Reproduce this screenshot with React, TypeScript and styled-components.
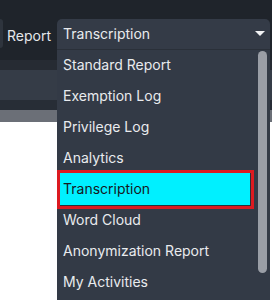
import React from "react";
import styled, { createGlobalStyle } from "styled-components";

const GlobalStyle = createGlobalStyle`
  html, body {
    margin: 0;
    padding: 0;
    background: #ffffff;
  }
  body {
    font-family: Inter, "Noto Sans", "Liberation Sans", sans-serif;
    width: 272px;
    height: 302px;
    overflow: hidden;
  }
`;

const reports = [
  "Standard Report",
  "Exemption Log",
  "Privilege Log",
  "Analytics",
  "Transcription",
  "Word Cloud",
  "Anonymization Report",
  "My Activities",
];

const selected = "Transcription";

const App: React.FC = () => {
  return (
    <>
      <GlobalStyle />
      <Page>
        <Header>
          <EdgeButton />
          <Label>Report</Label>
          <SelectWrap>
            <SelectBox>
              <span>{selected}</span>
              <Caret />
            </SelectBox>
            <Menu>
              <Options>
                {reports.map((item) => (
                  <Option key={item} $active={item === selected}>
                    {item}
                  </Option>
                ))}
              </Options>
              <Track>
                <Thumb />
              </Track>
            </Menu>
          </SelectWrap>
        </Header>
        <SubBar />
        <Toolbar />
        <Divider />
        <GreyStrip />
        <Content />
      </Page>
    </>
  );
};

export default App;

const Page = styled.div`
  display: flex;
  flex-direction: column;
  width: 272px;
  height: 302px;
`;

const Header = styled.div`
  display: flex;
  align-items: flex-start;
  height: 60px;
  box-sizing: border-box;
  padding-top: 19px;
  background: #1f242b;
`;

const EdgeButton = styled.div`
  width: 3px;
  height: 29px;
  background: #2e343d;
  border-radius: 0 4px 4px 0;
  margin-right: 4px;
`;

const Label = styled.div`
  color: #e6e8eb;
  font-size: 14px;
  line-height: 29px;
  height: 29px;
  padding-top: 2px;
  margin-right: 6px;
  width: 44px;
  white-space: nowrap;
`;

const SelectWrap = styled.div`
  position: relative;
  width: 213px;
`;

const SelectBox = styled.div`
  display: flex;
  align-items: center;
  justify-content: space-between;
  box-sizing: border-box;
  height: 30px;
  padding: 0 5px 2px 6px;
  background: #343b47;
  border-radius: 5px 5px 0 0;
  color: #e9ebee;
  font-size: 14px;
`;

const Caret = styled.div`
  width: 0;
  height: 0;
  border-left: 5px solid transparent;
  border-right: 5px solid transparent;
  border-top: 5px solid #f2f3f5;
  margin-top: 1px;
`;

const Menu = styled.div`
  position: absolute;
  left: 0;
  top: 30px;
  width: 213px;
  height: 251px;
  display: flex;
  background: #333a46;
  border-top: 1px solid #2a3039;
  box-sizing: border-box;
  z-index: 2;
`;

const Options = styled.div`
  display: flex;
  flex-direction: column;
  width: 198px;
`;

const Option = styled.div<{ $active?: boolean }>`
  height: ${(p) => (p.$active ? "33px" : "31px")};
  line-height: ${(p) => (p.$active ? "31px" : "29px")};
  box-sizing: border-box;
  font-size: 14px;
  white-space: nowrap;
  padding-left: ${(p) => (p.$active ? "3px" : "6px")};
  margin: ${(p) => (p.$active ? "-1px 4px -1px 3px" : "0")};
  color: ${(p) => (p.$active ? "#15181d" : "#e9ebee")};
  background: ${(p) => (p.$active ? "#00f0ff" : "transparent")};
  outline: ${(p) => (p.$active ? "3px solid #dc1a20" : "none")};
  box-shadow: ${(p) => (p.$active ? "inset -1px -1px 0 #2b3038" : "none")};
  position: ${(p) => (p.$active ? "relative" : "static")};
`;

const Track = styled.div`
  width: 15px;
  padding: 1px 0 0 3px;
  box-sizing: border-box;
`;

const Thumb = styled.div`
  width: 9px;
  height: 222px;
  border-radius: 5px;
  background: #9a9ea6;
`;

const SubBar = styled.div`
  height: 10px;
  background: #262b33;
`;

const Toolbar = styled.div`
  height: 30px;
  background: #353c47;
`;

const Divider = styled.div`
  height: 10px;
  background: #272d36;
`;

const GreyStrip = styled.div`
  height: 12px;
  background: #6b6f77;
`;

const Content = styled.div`
  flex: 1;
  background: #ffffff;
`;
